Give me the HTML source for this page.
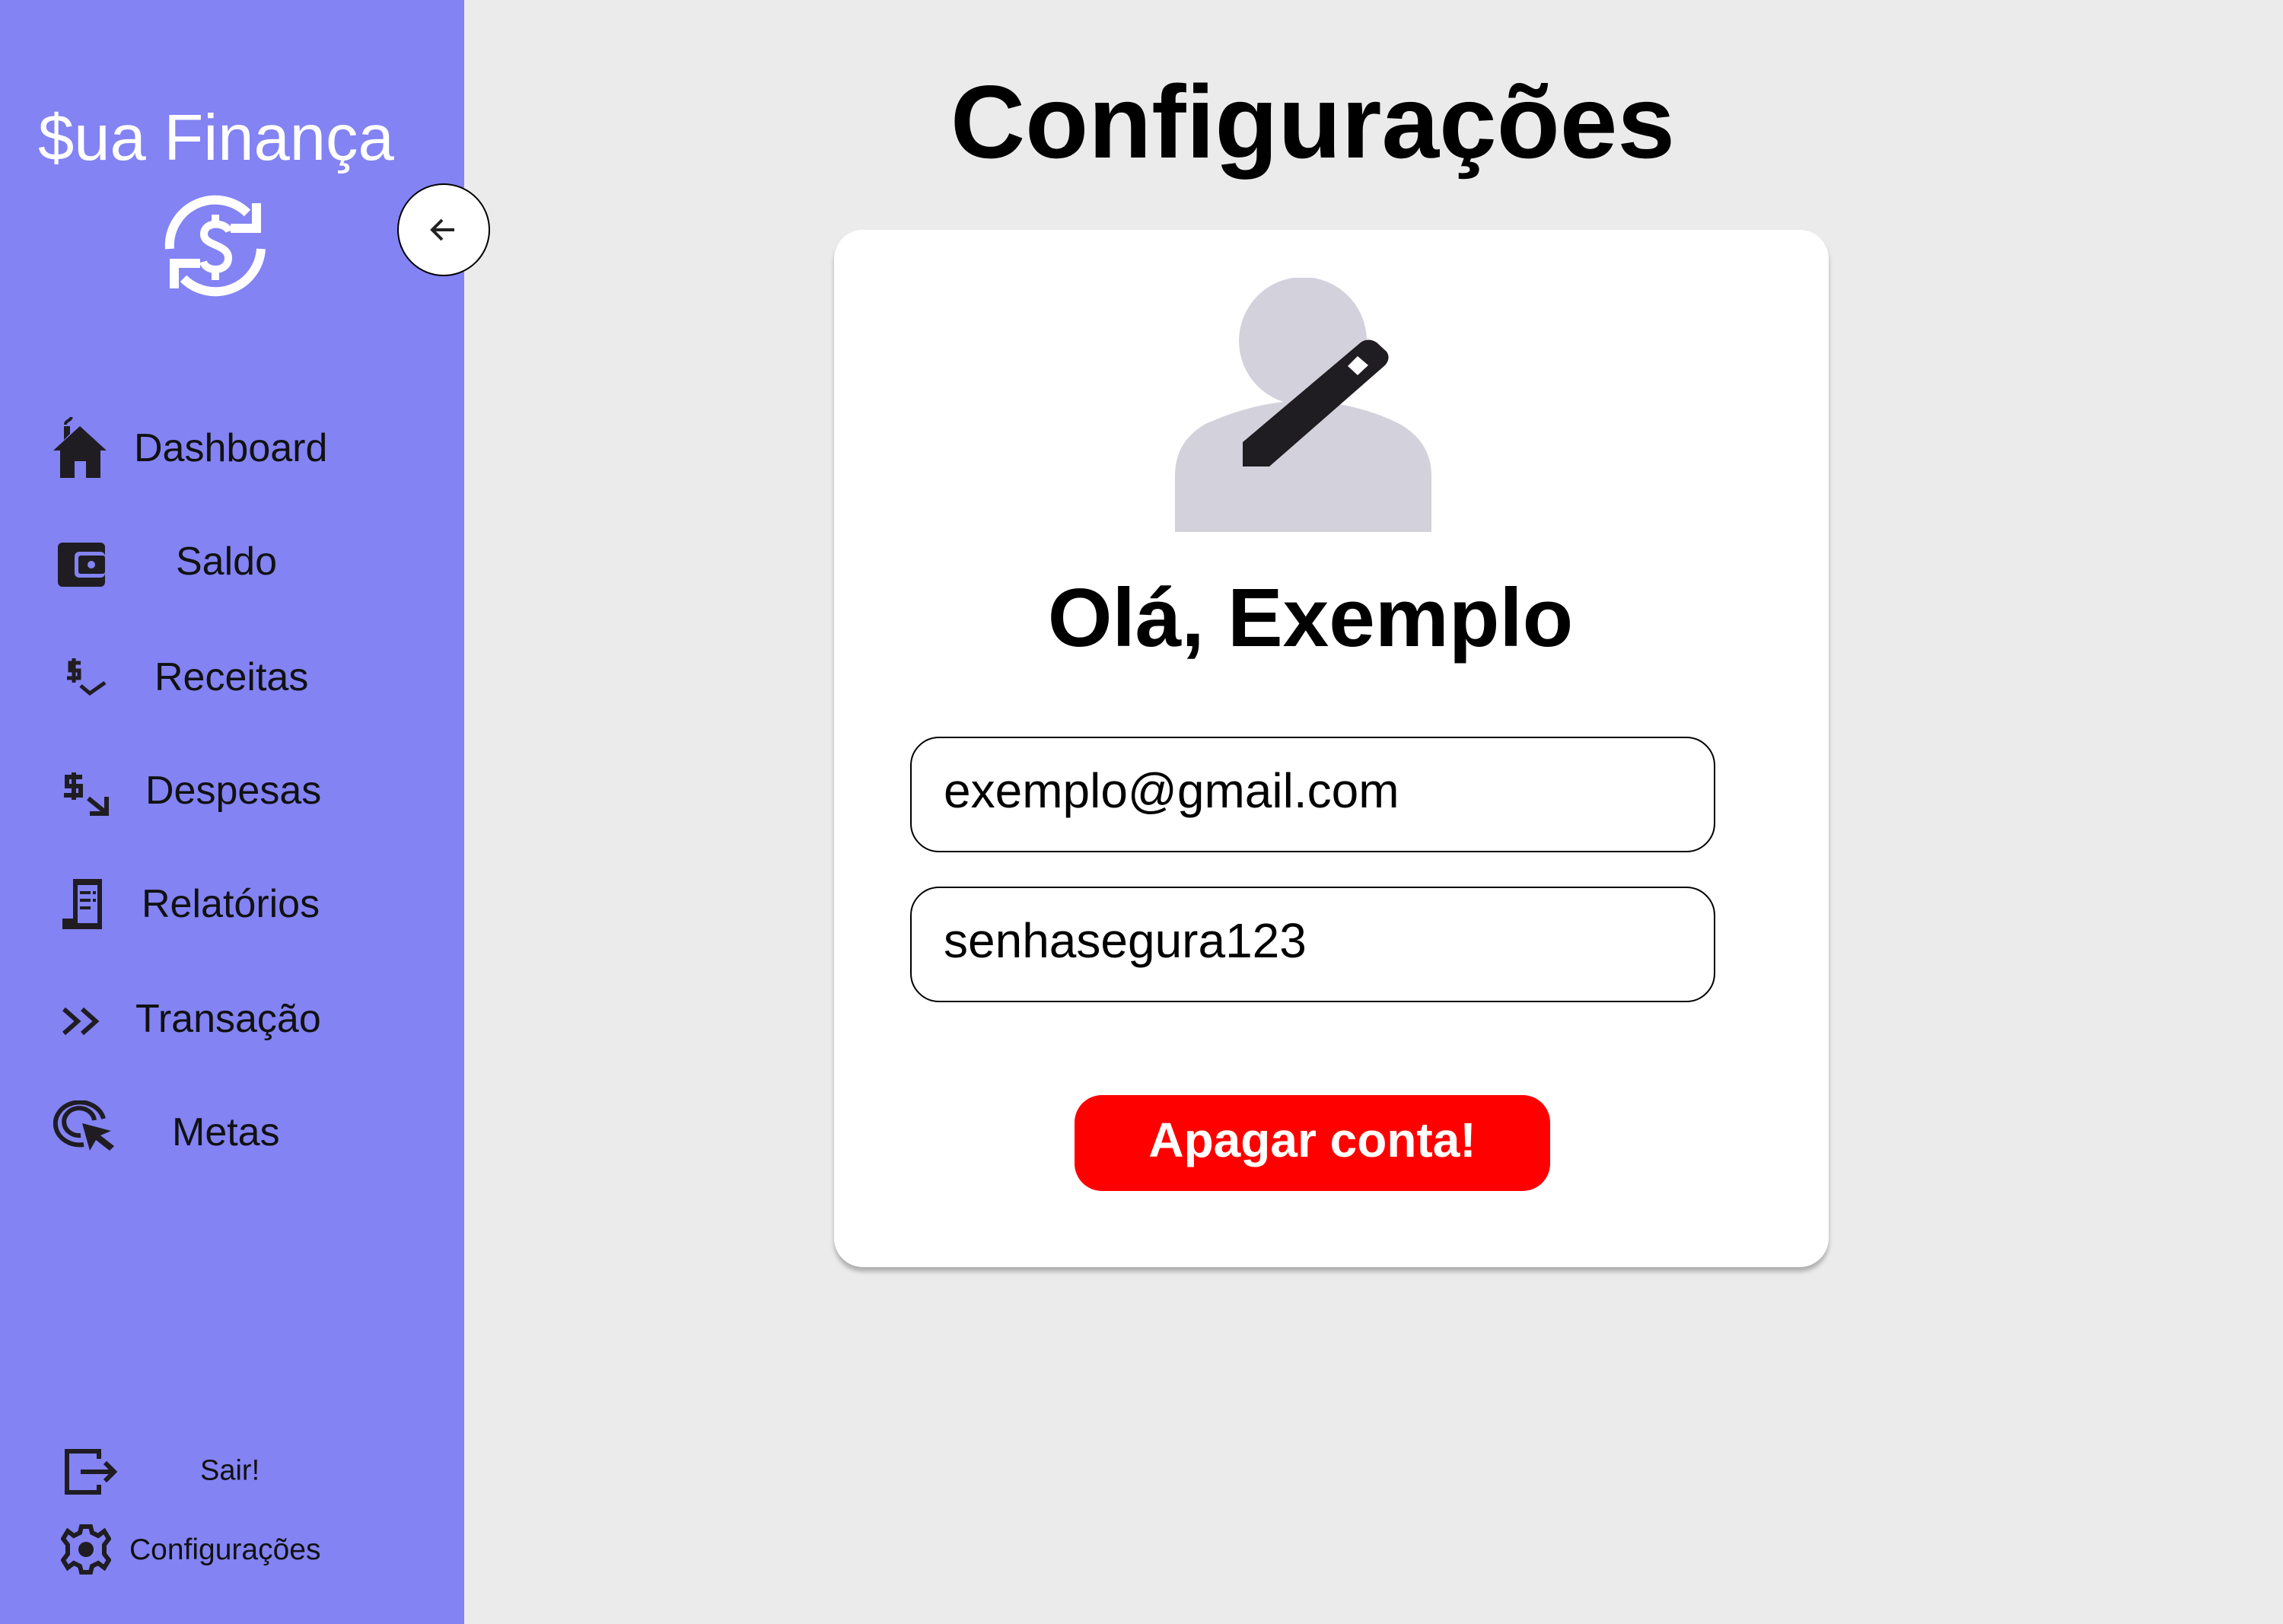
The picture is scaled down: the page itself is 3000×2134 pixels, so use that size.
<!DOCTYPE html>
<html><head><meta charset="utf-8"><style>
*{margin:0;padding:0;box-sizing:border-box}
html,body{width:3000px;height:2134px;overflow:hidden;background:#ebebeb;font-family:"Liberation Sans",sans-serif;color:#000}
.sb{position:absolute;left:0;top:0;width:610px;height:2134px;background:#8383f4}
.abs{position:absolute}
.nav{position:absolute;font-size:52px;color:#111;white-space:nowrap;transform:translateY(-50%)}
.card{position:absolute;left:1096px;top:302px;width:1307px;height:1363px;background:#fff;border-radius:38px;box-shadow:0 6px 6px rgba(0,0,0,.25)}
.inp{position:absolute;left:1196px;width:1058px;height:152px;border:2px solid #000;border-radius:38px;font-size:64px;padding-left:42px;line-height:138px}
</style></head><body>
<div class="sb"></div>
<div class="abs" style="left:50px;top:133px;font-size:85px;color:#fff;white-space:nowrap">$ua Finança</div>
<svg class="abs" style="left:210px;top:252px" width="146" height="142" viewBox="0 0 140 142" fill="none" stroke="#fff" stroke-width="12">
<path d="M10 75 A60 60 0 0 1 112 28"/><path d="M130 75 A60 60 0 0 1 28 114"/>
<path d="M124 15 V48 H90" /><path d="M16 127 V94 H50"/>
<path d="M88 52 C84 40 56 38 55 55 C54 72 88 68 87 88 C86 106 58 106 54 92" stroke-width="10"/>
<path d="M70 30 V44 M70 102 V116" stroke-width="10"/>
</svg>
<div class="abs" style="left:522px;top:241px;width:122px;height:122px;border-radius:50%;background:#fff;border:2px solid #000"></div>
<svg class="abs" style="left:563px;top:282px" width="40" height="40" viewBox="0 0 40 40" fill="none" stroke="#222" stroke-width="4"><path d="M34 20H6M18 7L5 20L18 33"/></svg>

<svg class="abs" style="left:70px;top:548px" width="70" height="82" viewBox="0 0 70 82" fill="#1f1d22"><path d="M35 12L70 44H62V80H43V58H28V80H9V44H0Z"/><path d="M14 30V12H22V22Z"/><path d="M16 10C16 4 22 6 24 0" stroke="#1f1d22" stroke-width="4" fill="none"/></svg>
<svg class="abs" style="left:76px;top:713px" width="64" height="60" viewBox="0 0 64 60"><rect x="0" y="0" width="62" height="58" rx="6" fill="#1f1d22"/><rect x="22" y="12" width="40" height="34" rx="6" fill="#8383f4"/><rect x="27" y="17" width="35" height="24" rx="3" fill="#1f1d22"/><circle cx="44" cy="29" r="5" fill="#8383f4"/></svg>
<svg class="abs" style="left:84px;top:865px" width="60" height="60" viewBox="0 0 60 60" fill="none" stroke="#1f1d22" stroke-width="5"><path d="M22 6H8V16H20V26H4M13 0V32"/><path d="M22 36L34 46L54 32"/></svg>
<svg class="abs" style="left:82px;top:1015px" width="62" height="60" viewBox="0 0 62 60" fill="none" stroke="#1f1d22" stroke-width="6"><path d="M26 6H6V18H24V30H2M15 0V36"/><path d="M34 34L56 52M36 54H58V32"/></svg>
<svg class="abs" style="left:82px;top:1155px" width="54" height="68" viewBox="0 0 54 68" fill="#1f1d22"><path d="M14 0H52V66H0V52H14Z"/><path d="M20 8H46V58H20Z" fill="#8383f4"/><rect x="23" y="16" width="14" height="4"/><rect x="23" y="26" width="14" height="4"/><rect x="23" y="36" width="14" height="4"/><rect x="40" y="16" width="4" height="4"/><rect x="40" y="26" width="4" height="4"/></svg>
<svg class="abs" style="left:82px;top:1322px" width="50" height="40" viewBox="0 0 50 40" fill="none" stroke="#1f1d22" stroke-width="6"><path d="M2 4L20 20L2 36M26 4L44 20L26 36"/></svg>
<svg class="abs" style="left:70px;top:1446px" width="86" height="70" viewBox="0 0 86 70" fill="none" stroke="#1f1d22" stroke-width="6"><path d="M66 24A32 28 0 1 0 40 58"/><path d="M54 26A20 18 0 1 0 36 46"/><path d="M38 30L48 66L56 52L74 66L80 60L62 46L76 40Z" fill="#1f1d22" stroke="none"/></svg>

<div class="nav" style="left:176px;top:589px">Dashboard</div>
<div class="nav" style="left:231px;top:738px">Saldo</div>
<div class="nav" style="left:203px;top:890px">Receitas</div>
<div class="nav" style="left:191px;top:1039px">Despesas</div>
<div class="nav" style="left:186px;top:1188px">Relatórios</div>
<div class="nav" style="left:178px;top:1339px">Transação</div>
<div class="nav" style="left:226px;top:1488px">Metas</div>

<svg class="abs" style="left:84px;top:1903px" width="72" height="62" viewBox="0 0 72 62" fill="none" stroke="#1f1d22" stroke-width="6"><path d="M46 14V4H4V58H46V48"/><path d="M22 31H66M54 19L66 31L54 43"/></svg>
<div class="nav" style="left:263px;top:1933px;font-size:38px">Sair!</div>
<svg class="abs" style="left:80px;top:2003px" width="66" height="66" viewBox="0 0 66 66"><g transform="translate(33 33)"><path fill="none" stroke="#1f1d22" stroke-width="6" d="M-6-30H6L8-22L16-18L24-24L30-14L24-6V6L30 14L24 24L16 18L8 22L6 30H-6L-8 22L-16 18L-24 24L-30 14L-24 6V-6L-30-14L-24-24L-16-18L-8-22Z"/><circle r="10" fill="#1f1d22"/></g></svg>
<div class="nav" style="left:170px;top:2037px;font-size:39px">Configurações</div>

<div class="abs" style="left:1000px;width:1450px;top:80px;text-align:center;font-size:136px;font-weight:bold;line-height:160px">Configurações</div>
<div class="card"></div>
<svg class="abs" style="left:1544px;top:365px" width="340" height="334" viewBox="0 0 340 334">
<circle cx="168" cy="83" r="84" fill="#d3d1dc"/>
<path d="M0 334V260C0 225 18 205 40 192C90 170 130 162 168 162C210 162 255 172 295 192C320 206 337 228 337 260V334Z" fill="#d3d1dc"/>
<path d="M89 216L244 85Q254 78 265 85L278 97Q284 106 276 115L124 248H89Z" fill="#1f1d22"/><path d="M227 116L240 103L254 115L240 128Z" fill="#fff"/></svg>
<div class="abs" style="left:1072px;width:1300px;top:747px;text-align:center;font-size:109px;font-weight:bold;line-height:130px">Olá, Exemplo</div>
<div class="inp" style="top:968px">exemplo@gmail.com</div>
<div class="inp" style="top:1165px">senhasegura123</div>
<div class="abs" style="left:1412px;top:1439px;width:625px;height:126px;background:#fe0000;border-radius:36px;color:#fff;font-weight:bold;font-size:64px;text-align:center;line-height:118px">Apagar conta!</div>
</body></html>
